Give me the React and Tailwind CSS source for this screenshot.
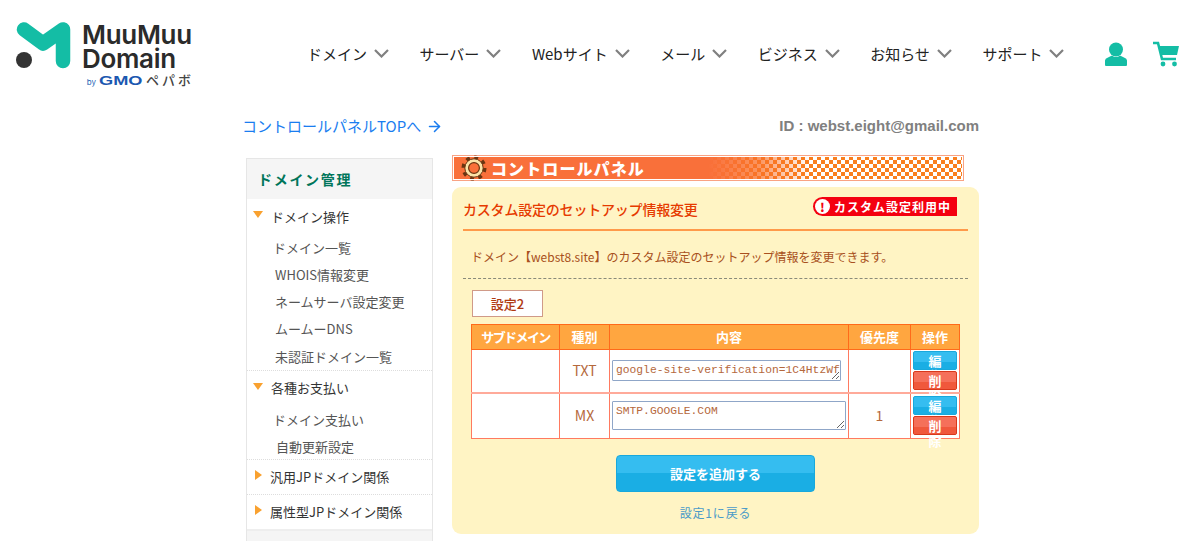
import { ArrowRight } from 'lucide-react';

const navItems = ['ドメイン', 'サーバー', 'Webサイト', 'メール', 'ビジネス', 'お知らせ', 'サポート'];
const cjk = "font-['Noto_Sans_CJK_JP',sans-serif]";

function Logo() {
  return (
    <div className="flex flex-col items-end w-[176px]">
      <div className="flex items-start gap-[11px] h-[50px]">
        <svg width="55" height="47" viewBox="0 0 55 47">
          <path d="M8 7.5 L27 21.5 L47 7.5 V39" fill="none" stroke="#14bda5" strokeWidth="14.5" strokeLinecap="round" strokeLinejoin="round" />
          <circle cx="8" cy="38" r="8" fill="#333333" />
        </svg>
        <div className="font-['Inter',sans-serif] font-semibold text-[#2b2b2b] text-[26px] leading-[24px] tracking-[-0.3px] w-[110px] mt-[1px]">
          <div>MuuMuu</div>
          <div>Domain</div>
        </div>
      </div>
      <div className="flex items-baseline mt-[2px] -mr-[2px] leading-[12px]">
        <span className="font-['Inter',sans-serif] text-[8px] text-[#2a68b8] mr-[3px]">by</span>
        <span className="font-['Liberation_Sans',sans-serif] font-bold text-[13px] text-[#1c58b0] w-[47px] scale-x-[1.4] origin-left">GMO</span>
        <span className={`${cjk} text-[13px] font-medium text-[#444] tracking-[3px]`}>ペパボ</span>
      </div>
    </div>
  );
}

function Header() {
  return (
    <header className="flex items-start h-[110px] pt-[22px] pl-[16px]">
      <Logo />
      <nav className={`${cjk} flex items-center gap-[30.5px] ml-[115px] mt-[20px] h-[24px] text-[15px] text-[#222]`}>
        {navItems.map((item) => (
          <div key={item} className="flex items-center gap-[7px]">
            <span>{item}</span>
            <svg width="15" height="9" viewBox="0 0 15 9" className="mt-[-2px]">
              <path d="M1 1 L7.5 7.5 L14 1" fill="none" stroke="#808080" strokeWidth="2.2" />
            </svg>
          </div>
        ))}
      </nav>
      <svg width="24" height="24" viewBox="0 0 24 24" className="ml-[40px] mt-[20px]">
        <circle cx="12" cy="7.5" r="7" fill="#14bda5" />
        <path d="M1 18.5 Q1 16.5 4 15.5 L8 13.5 Q12 16.5 16 13.5 L20 15.5 Q23 16.5 23 18.5 V23 Q23 24 22 24 H2 Q1 24 1 23 Z" fill="#14bda5" />
      </svg>
      <svg width="28" height="26" viewBox="0 0 28 26" className="ml-[24px] mt-[19px]">
        <path d="M1 2 H6 L10 18 H24" fill="none" stroke="#14bda5" strokeWidth="2.6" />
        <path d="M7 5 H27 L25 14 H9 Z" fill="#14bda5" />
        <circle cx="11" cy="23" r="2.4" fill="#14bda5" />
        <circle cx="22.5" cy="23" r="2.4" fill="#14bda5" />
      </svg>
    </header>
  );
}

function SideHead({ open, children, tall }) {
  return (
    <div className={`flex items-center ${tall ? 'h-[35px]' : 'h-[34px]'} pl-[6px] text-[13px] text-[#333]`}>
      {open ? (
        <span className="w-0 h-0 border-x-[5px] border-x-transparent border-t-[7px] border-t-[#f9a12f] mb-[4px]" />
      ) : (
        <span className="w-0 h-0 ml-[2px] border-y-[5px] border-y-transparent border-l-[7px] border-l-[#f9a12f] mb-[4px]" />
      )}
      <span className="ml-[8px]">{children}</span>
    </div>
  );
}

function Sidebar() {
  const sub = 'h-[27px] flex items-center text-[13px] text-[#555]';
  return (
    <aside className={`${cjk} w-[187px] h-[383px] mt-[3px] ml-[3px] shrink-0 bg-white border border-[#e6e6e6] border-b-0`}>
      <div className="h-[40px] bg-[#f5f5f5] flex items-center pl-[11px] text-[14px] font-bold tracking-[1.7px] text-[#00755a]">ドメイン管理</div>
      <SideHead open tall>ドメイン操作</SideHead>
      <div className="pl-[26px] border-b border-dotted border-[#ddd]">
        <div className={sub}>ドメイン一覧</div>
        <div className={`${sub} pl-[2px]`}>WHOIS情報変更</div>
        <div className={`${sub} pl-[2px]`}>ネームサーバ設定変更</div>
        <div className={`${sub} pl-[2px]`}>ムームーDNS</div>
        <div className="h-[28px] pt-[1px] flex items-center text-[13px] text-[#555] pl-[2px]">未認証ドメイン一覧</div>
      </div>
      <SideHead open>各種お支払い</SideHead>
      <div className="pl-[26px] pt-[1px] border-b border-dotted border-[#ddd]">
        <div className={sub}>ドメイン支払い</div>
        <div className="h-[26px] pt-[1px] flex items-center text-[13px] text-[#555] pl-[3px]">自動更新設定</div>
      </div>
      <div className="border-b border-dotted border-[#ddd]"><SideHead>汎用JPドメイン関係</SideHead></div>
      <div className="border-b-2 border-[#eee]"><SideHead>属性型JPドメイン関係</SideHead></div>
      <div className="h-[12px] bg-[#f5f5f5]" />
    </aside>
  );
}

function Banner() {
  return (
    <div className="h-[26px] w-[512px] border border-[#f9a384] outline-1 -outline-offset-2 outline-white bg-[linear-gradient(90deg,#f9703a_0%,#f9703a_50%,rgba(249,112,40,0.75)_60%,rgba(249,112,40,0)_70%),repeating-conic-gradient(#f97f1e_0_25%,#ffffff_0_50%)] [background-size:100%_100%,8px_8px] flex items-center pl-[8px]">
      <svg width="26" height="26" viewBox="0 0 26 26" className="shrink-0">
        <circle cx="13" cy="13" r="10" fill="none" stroke="#6b3410" strokeWidth="5" strokeDasharray="3.6 4.25" />
        <circle cx="13" cy="13" r="9.2" fill="#fbe3a8" stroke="#6b3410" strokeWidth="1" />
        <circle cx="13" cy="13" r="5.4" fill="#f9703a" stroke="#6b3410" strokeWidth="1.2" />
      </svg>
      <span className={`${cjk} ml-[4px] text-[16px] font-black text-white tracking-[1.1px]`}>コントロールパネル</span>
    </div>
  );
}

function ActionButton({ color, top, bottom, chars }) {
  return (
    <div className={`relative h-[19px] w-[44px] mx-auto rounded-[2px] border ${color} ${top} text-center text-[13px] font-bold leading-[15px] pt-[1px] text-white`}>
      <div className={`absolute inset-x-0 bottom-0 h-[7px] ${bottom}`} />
      <div className="relative">{chars[0]}<br />{chars[1]}</div>
    </div>
  );
}

function Actions() {
  return (
    <div className="flex flex-col gap-[1px]">
      <ActionButton color="border-[#18a8dc]" top="bg-[#35bdf0]" bottom="bg-[#1aaee4]" chars="編集" />
      <ActionButton color="border-[#d8381c]" top="bg-[#f5705a]" bottom="bg-[#f0583c]" chars="削除" />
    </div>
  );
}

function RecordsTable() {
  const th = 'border border-[#ff6a1a] font-bold text-[13px] text-white text-center h-[25px] p-0';
  const td = 'border border-[#ff7a60] text-center text-[13px] text-[#b5683c] p-0';
  const area = "block bg-white border border-[#8fa6c8] rounded-[1px] font-['Liberation_Mono',monospace] text-[11.3px] leading-[14px] text-[#b5683c] pl-[3px] pt-[2px] overflow-hidden whitespace-nowrap outline-none";
  return (
    <table className="w-[488px] mt-[7px] ml-[19px] border-collapse table-fixed bg-white">
      <colgroup>
        <col className="w-[88px]" />
        <col className="w-[50px]" />
        <col className="w-[239px]" />
        <col className="w-[62px]" />
        <col className="w-[49px]" />
      </colgroup>
      <thead>
        <tr className="bg-[#ffa640]">
          <th className={`${th} text-[12px] tracking-[-1.6px]`}>サブドメイン</th>
          <th className={th}>種別</th>
          <th className={th}>内容</th>
          <th className={th}>優先度</th>
          <th className={th}>操作</th>
        </tr>
      </thead>
      <tbody>
        <tr className="h-[43px] border-b-2 border-[#ffaa9a]">
          <td className={td}></td>
          <td className={`${td} text-[14px]`}>TXT</td>
          <td className={td}>
            <textarea readOnly value="google-site-verification=1C4HtzWf" className={`${area} w-[229px] h-[21px] ml-[2px]`} />
          </td>
          <td className={td}></td>
          <td className={td}><Actions /></td>
        </tr>
        <tr className="h-[46px]">
          <td className={td}></td>
          <td className={`${td} text-[14px]`}>MX</td>
          <td className={td}>
            <textarea readOnly value="SMTP.GOOGLE.COM" className={`${area} w-[234px] h-[29px] ml-[2px]`} />
          </td>
          <td className={`${td} text-[14px]`}>1</td>
          <td className={td}><Actions /></td>
        </tr>
      </tbody>
    </table>
  );
}

function Panel() {
  return (
    <section className={`${cjk} w-[527px] h-[347px] mt-[6px] rounded-[9px] bg-[#fff4c4]`}>
      <div className="mx-[11px] h-[44px] border-b-2 border-[#ff9a4a] flex items-center justify-between pt-[3px]">
        <h2 className="text-[14px] tracking-[-0.2px] font-medium text-[#e63a00]">カスタム設定のセットアップ情報変更</h2>
        <div className="flex items-center h-[19px] w-[144px] mr-[11px] mb-[6px] rounded-l-full bg-[#f40010] pl-[2px]">
          <span className="flex items-center justify-center w-[15px] h-[15px] rounded-full bg-white text-[#f40010] text-[12px] font-black leading-none">!</span>
          <span className="ml-[4px] text-[12px] font-bold text-white tracking-[1px] whitespace-nowrap">カスタム設定利用中</span>
        </div>
      </div>
      <p className="mx-[11px] h-[48px] pt-[16px] pl-[8px] border-b border-dashed border-[#8a8a7a] text-[12px] leading-[20px] text-[#a85020]">
        ドメイン【webst8.site】のカスタム設定のセットアップ情報を変更できます。
      </p>
      <div className="ml-[20px] mt-[11px] w-[71px] h-[27px] bg-white border border-[#d09a88] flex items-center justify-center text-[13px] font-medium text-[#b03a10]">設定2</div>
      <RecordsTable />
      <button className="block ml-[164px] mt-[16px] w-[199px] h-[37px] rounded-[4px] border border-[#18a8dc] bg-[linear-gradient(#35bdf0_0%,#35bdf0_50%,#1aaee4_50%,#1aaee4_100%)] text-[13px] font-bold text-white">
        設定を追加する
      </button>
      <div className="mt-[11px] w-[199px] ml-[164px] text-center text-[12px] leading-[20px] tracking-[0.8px] text-[#4a9bc8]">設定1に戻る</div>
    </section>
  );
}

export default function App() {
  return (
    <div className="h-[541px] overflow-hidden bg-white">
      <Header />
      <div className="ml-[243px] w-[736px]">
        <div className={`${cjk} flex items-center justify-between h-[35px] mb-[11px] -mt-[1px]`}>
          <a className="flex items-center text-[15px] text-[#1a7df0] -ml-[1px]">
            コントロールパネルTOPへ
            <ArrowRight size={17} strokeWidth={2.2} className="ml-[5px]" />
          </a>
          <span className="font-['Liberation_Sans',sans-serif] font-bold text-[15px] text-[#808080]">ID : webst.eight@gmail.com</span>
        </div>
        <div className="flex gap-[19px]">
          <Sidebar />
          <div>
            <Banner />
            <Panel />
          </div>
        </div>
      </div>
    </div>
  );
}
